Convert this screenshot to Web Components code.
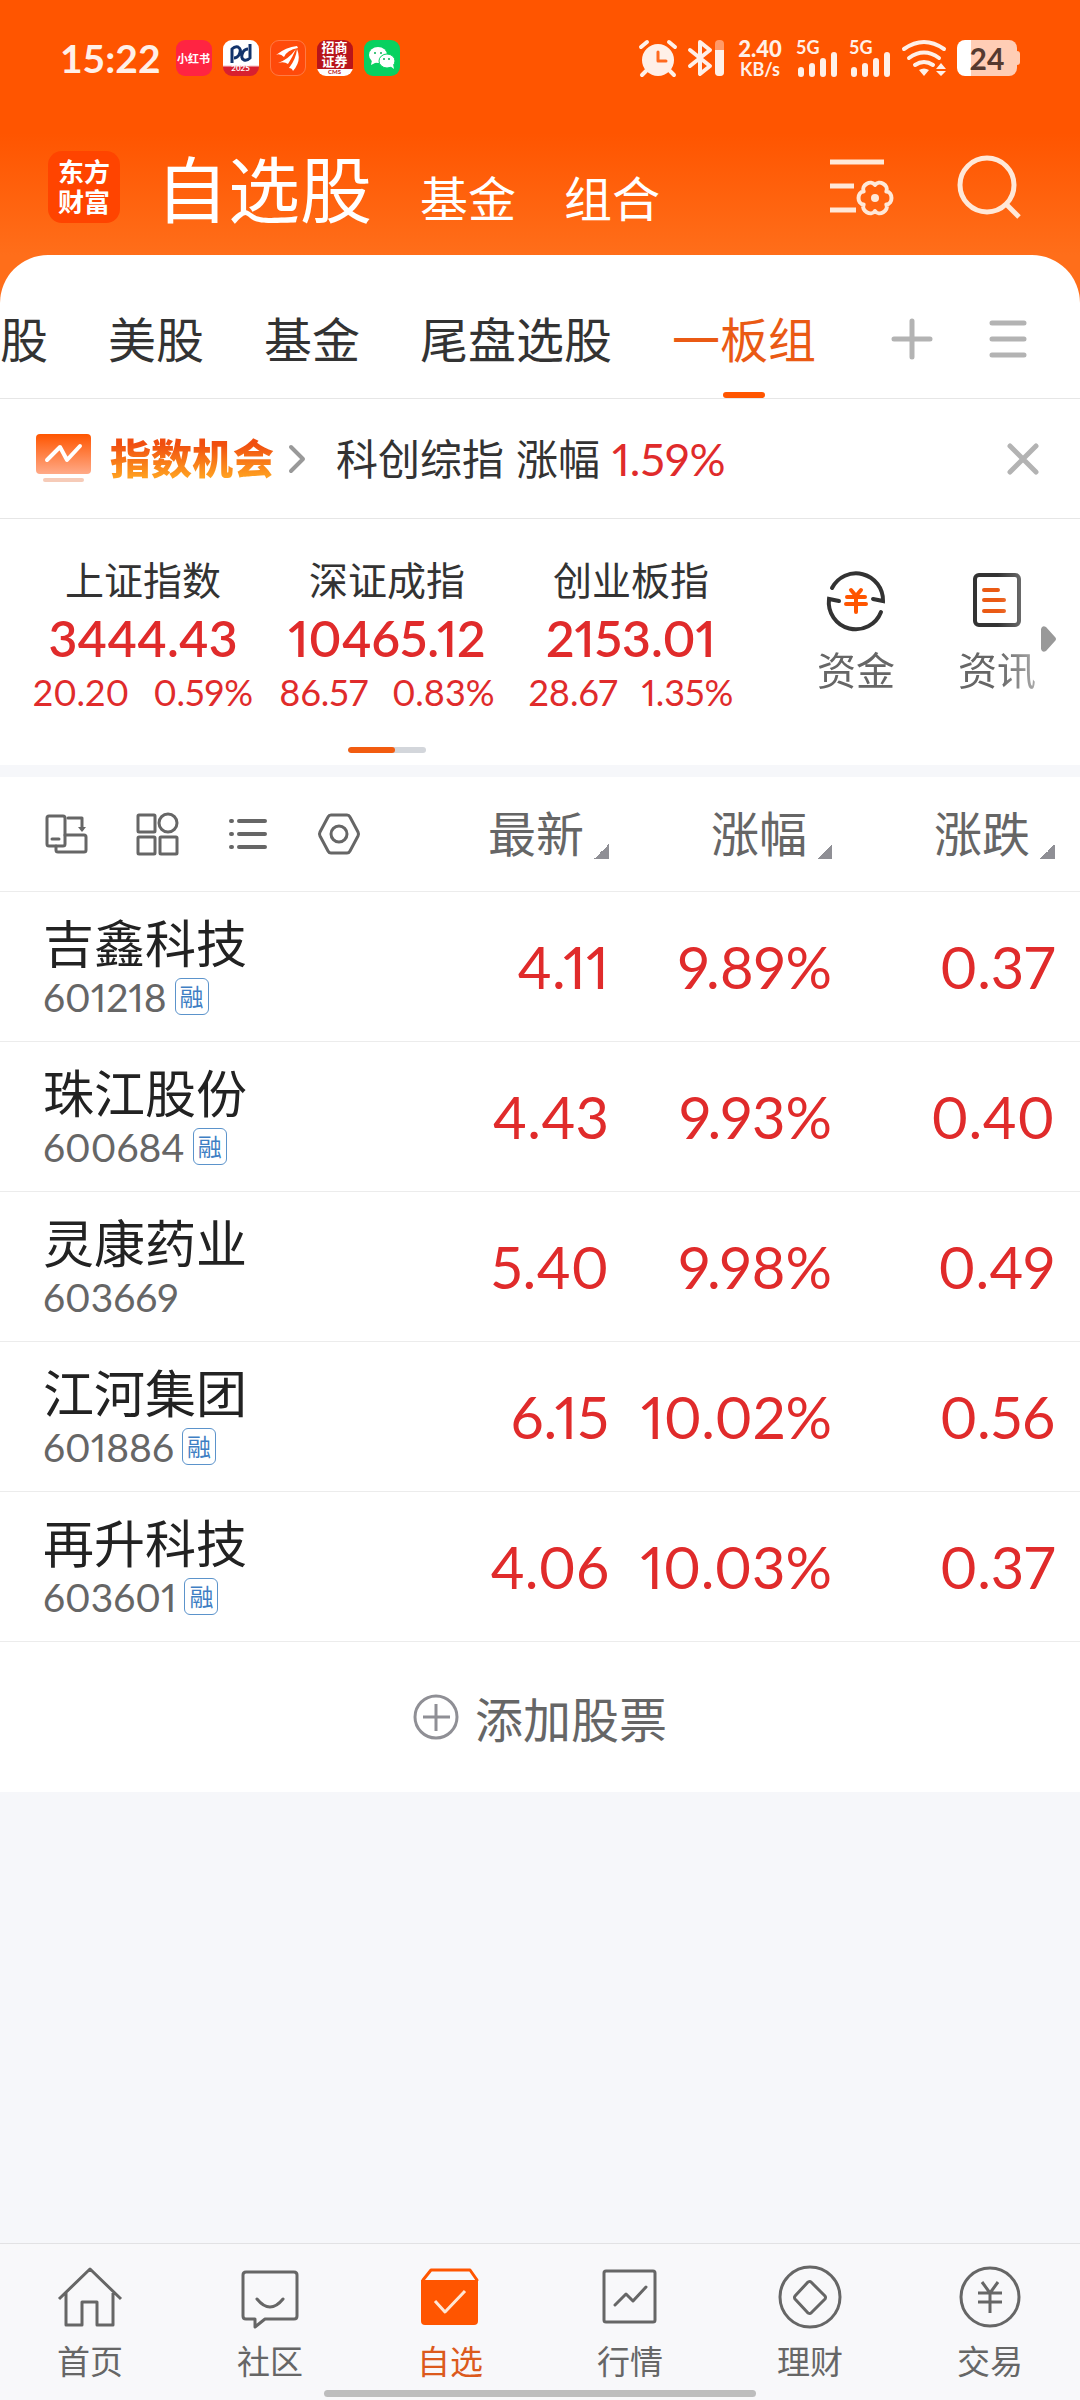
<!DOCTYPE html>
<html lang="zh-CN">
<head>
<meta charset="utf-8">
<meta name="viewport" content="width=device-width, initial-scale=1">
<title>自选股</title>
<style>
  :root {
    --color-accent: #ff5500;
    --color-accent-text: #ea5a14;
    --color-up: #e02b2b;
    --color-text: #333;
    --color-muted: #666;
    --color-faint: #b3b3b3;
    --color-line: #e6e6e6;
    --color-page: #f6f7fa;
  }

  body {
    margin: 0;
    font-family: Lato, "Noto Sans CJK SC", sans-serif;
    font-variant-numeric: proportional-nums;
    color: var(--color-text);
    background: var(--color-page);
  }
</style>
</head>
<body>
<watchlist-app></watchlist-app>

<script>
// Shapes for <line-icon>, drawn in currentColor
const ICONS = {
  alarm: [38, 36, `
    <circle cx="19" cy="20" r="16" fill="currentColor" stroke="none"/>
    <path d="M2 7l6-5M36 7l-6-5M7 31l-4 4M31 31l4 4" stroke-width="4"/>
    <path d="M19 12v9h8" stroke="#ff6a20" stroke-width="3"/>`],
  bluetooth: [36, 36, `
    <path d="M2 10l20 16-10 8V2l10 8L2 26" stroke-width="4"/>
    <rect x="27" y="0" width="9" height="36" rx="4" fill="currentColor" stroke="none" opacity=".45"/>
    <path d="M27 10h9v22a4 4 0 0 1-4 4h-1a4 4 0 0 1-4-4z" fill="currentColor" stroke="none"/>`],
  signal: [42, 36, `
    <text x="0" y="14" font-size="18" font-weight="700" fill="currentColor" stroke="none">5G</text>
    <path d="M5 30v4M16 26v8M27 21v13M38 15v19" stroke-width="6"/>`],
  wifi: [44, 36, `
    <path d="M2 9q20-14 40 0M7 18q15-11 30 0M13 25q9-6 18 0" stroke-width="4"/>
    <path d="M17 30q5-3 10 0l-5 6zM34 29l5-6 5 6zM34 31h10l-5 5z" fill="currentColor" stroke="none"/>`],
  manage: [64, 56, `
    <path d="M0 3h54M0 27h24M0 51h26" stroke-width="5" stroke-linecap="butt"/>
    <path d="M56.3 32.5C63.2 33 63.2 45 56.3 45.5C59.3 51.8 48.9 57.8 45 52C41.1 57.8 30.7 51.8 33.7 45.5C26.8 45 26.8 33 33.7 32.5C30.7 26.2 41.1 20.2 45 26C48.9 20.2 59.3 26.2 56.3 32.5Z" stroke-width="4"/>
    <circle cx="45" cy="39" r="4" fill="currentColor" stroke="none"/>`],
  search: [62, 62, `<circle cx="29" cy="29" r="27" stroke-width="5"/><path d="M48 48l13 13" stroke-width="5" stroke-linecap="butt"/>`],
  plus: [40, 40, `<path d="M20 2v36M2 20h36" stroke-width="5"/>`],
  menu: [36, 36, `<path d="M2 2h32M2 18h32M2 34h32" stroke-width="5"/>`],
  chevron: [16, 28, `<path d="M2 2l12 12L2 26" stroke-width="4"/>`],
  close: [30, 30, `<path d="M2 2l26 26M28 2L2 28" stroke-width="5"/>`],
  board: [56, 50, `
    <defs><linearGradient id="g" x2="0" y2="1"><stop stop-color="#ff5500"/><stop offset="1" stop-color="#ffaa88"/></linearGradient></defs>
    <rect width="55" height="40" rx="4" fill="url(#g)" stroke="none"/>
    <path d="M11 26l13-13 7 13 13-14" stroke="#fff" stroke-width="4"/>
    <path d="M9 46h37" stroke="#f6cbb8" stroke-width="4"/>`],
  funds: [58, 58, `
    <path d="M5 17A27 27 0 0 1 56 30l-10-2M54 41A27 27 0 0 1 2 28l10 2" stroke-width="4" stroke-linejoin="miter"/>
    <path d="M24 19l5 6 5-6M20 26h18M19 33h20M29 26v15" stroke="#ff5500" stroke-width="4"/>`],
  news: [48, 58, `
    <rect x="2" y="4" width="44" height="50" rx="4" stroke-width="4"/>
    <path d="M11 19h14M11 29h20M11 40h20" stroke="#ea5a14" stroke-width="4"/>`],
  rotate: [42, 42, `
    <rect x="2" y="3" width="18" height="30" rx="2"/>
    <path d="M7 26h7M20 22h19a2 2 0 0 1 2 2v13a2 2 0 0 1-2 2H13a2 2 0 0 1-2-2v-4M23 5h14v11"/>
    <path d="M33 14h8l-4 5z" fill="currentColor" stroke="none"/>`],
  grid: [42, 42, `
    <rect x="2" y="2" width="17" height="17" rx="1"/><circle cx="32" cy="10" r="9"/>
    <rect x="2" y="24" width="17" height="17" rx="1"/><rect x="24" y="24" width="17" height="17" rx="1"/>`],
  list: [42, 42, `<path d="M12 8h26M12 21h26M12 34h26M4 8h1M4 21h1M4 34h1" stroke-width="4"/>`],
  hexagon: [42, 42, `<path d="M13 2h16q2 0 3 2l8 15q1 2 0 4l-8 15q-1 2-3 2H13q-2 0-3-2L2 23q-1-2 0-4L10 4q1-2 3-2z"/><circle cx="21" cy="21" r="8"/>`],
  add: [46, 46, `<circle cx="23" cy="23" r="21"/><path d="M10 23h27M23 10v27" stroke-linecap="butt"/>`],
  home: [64, 64, `<path d="M1 34L32 4l31 30M8 28v32h16V37h15v23h16V28" stroke-linecap="butt"/>`],
  chat: [64, 64, `<path d="M8 7h48q3 0 3 3v41q0 3-3 3H27l-10 8v-8H8q-3 0-3-3V10q0-3 3-3zM19 34q13 16 26 0"/>`],
  box: [64, 64, `
    <path d="M3 15h57v41q0 4-4 4H7q-4 0-4-4z" fill="currentColor" stroke="none"/>
    <path d="M5 15l8-10h39l7 10"/>
    <path d="M17 36l10 11 20-21" stroke="#ffe6d4" stroke-linecap="butt"/>`],
  chart: [64, 64, `<rect x="6" y="6" width="51" height="51" rx="2"/><path d="M17 40l11-11 7 7 13-14"/>`],
  wealth: [64, 64, `<circle cx="32" cy="32" r="30"/><path d="M30 17q2-1 3 0l14 14q1 1 0 3L33 48q-1 1-3 0L17 34q-1-2 0-3z"/>`],
  trade: [64, 64, `<circle cx="32" cy="32" r="29"/><path d="M24 17l8 11 8-11M20 28h24M20 37h24M32 28v20" stroke-linecap="butt"/>`]
};

/** <line-icon name="..."> - one drawing from the icon set */
class LineIcon extends HTMLElement {
  connectedCallback() {
    const [width, height, body] = ICONS[this.getAttribute('name')];
    this.attachShadow({ mode: 'open' }).innerHTML = `
      <style>
        :host { display: block; flex: none; }
        svg { display: block; overflow: visible; }
      </style>
      <svg width="${width}" height="${height}" viewBox="0 0 ${width} ${height}" aria-hidden="true"
        fill="none" stroke="currentColor" stroke-width="3" stroke-linecap="round" stroke-linejoin="round">${body}</svg>
    `;
  }
}
customElements.define('line-icon', LineIcon);

/** <app-badge> - small rounded notification icon, content in the slot */
class AppBadge extends HTMLElement {
  connectedCallback() {
    this.attachShadow({ mode: 'open' }).innerHTML = `
      <style>
        :host {
          display: flex;
          flex-direction: column;
          align-items: center;
          justify-content: center;
          box-sizing: border-box;
          width: 36px;
          height: 36px;
          border-radius: 9px;
          color: #fff;
          font-size: 11px;
          font-weight: 700;
          line-height: 13px;
          text-align: center;
        }
      </style>
      <slot></slot>
    `;
  }
}
customElements.define('app-badge', AppBadge);

/** <status-bar> - phone status line */
class StatusBar extends HTMLElement {
  connectedCallback() {
    this.attachShadow({ mode: 'open' }).innerHTML = `
      <style>
        :host {
          display: flex;
          align-items: center;
          justify-content: space-between;
          padding: 40px 60px;
          height: 36px;
          color: #fff0e8;
          font-variant-numeric: tabular-nums;
        }
        .group { display: flex; align-items: center; gap: 11px; }
        time { font-size: 39px; font-weight: 700; line-height: 36px; margin-right: 4px; }
        .red { background: #ff2442; }
        .bank { background: linear-gradient(#fff 70%, #d8202f 76%); }
        .east { background: #ff4a0a; border: 1px solid #ff7a45; }
        .cms { background: linear-gradient(#b8141a 80%, #fff 82%); font-size: 13px; line-height: 14px; }
        .chat { background: #07d160; }
        .bank small, .cms small { font-size: 8px; line-height: 8px; }
        .cms span { width: 28px; }
        .cms small { font-size: 6px; color: #b8141a; }
        .speed { width: 50px; font-weight: 700; text-align: center; font-size: 18px; line-height: 18px; }
        .speed b { display: block; font-size: 22px; line-height: 22px; }
        .battery { display: flex; align-items: center; }
        .level {
          width: 60px;
          border-radius: 8px;
          background: linear-gradient(to right, #fff 14px, #ffcdb5 14px);
          color: #553a30;
          font-size: 30px;
          font-weight: 700;
          line-height: 36px;
          text-align: center;
        }
        .nub { width: 3px; height: 14px; border-radius: 0 3px 3px 0; background: #ffcdb5; }
      </style>
      <div class="group">
        <time>15:22</time>
        <app-badge class="red">小红书</app-badge>
        <app-badge class="bank">
          <svg width="22" height="20" viewBox="0 0 22 20" fill="none" stroke="#12336b" stroke-width="3"><path d="M2 19V8M2 13V5q3-3 6-2 4 2 1 8-2 3-5 3M20 0v14q-3 3-6 2-4-2-1-8 2-3 5-3"/></svg>
          <small>2025</small>
        </app-badge>
        <app-badge class="east">
          <svg width="26" height="26" viewBox="0 0 26 26" fill="#fff"><path d="M1 10Q11 2 22 1l1 2Q12 5 9 12 5 8 1 10zM3 18Q14 14 21 4q-4 9-8 15-4-3-10-1zM14 23Q21 14 22 4q5 12-4 22-1-3-4-3z"/></svg>
        </app-badge>
        <app-badge class="cms"><span>招商<br>证券</span><small>CMS</small></app-badge>
        <app-badge class="chat">
          <svg width="28" height="24" viewBox="0 0 28 24"><ellipse cx="10" cy="9" rx="9" ry="8" fill="#fff"/><path d="M4 14l-1 5 6-3z" fill="#fff"/><ellipse cx="19" cy="15" rx="8" ry="7" fill="#fff" stroke="#07d160"/><path d="M22 20l4 3-1-5z" fill="#fff"/><g fill="#07b053"><circle cx="7" cy="7" r="1"/><circle cx="13" cy="7" r="1"/><circle cx="16" cy="13" r="1"/><circle cx="21" cy="13" r="1"/></g></svg>
        </app-badge>
      </div>
      <div class="group">
        <line-icon name="alarm"></line-icon>
        <line-icon name="bluetooth"></line-icon>
        <div class="speed"><b>2.40</b>KB/s</div>
        <line-icon name="signal"></line-icon>
        <line-icon name="signal"></line-icon>
        <line-icon name="wifi"></line-icon>
        <div class="battery"><div class="level">24</div><div class="nub"></div></div>
      </div>
    `;
  }
}
customElements.define('status-bar', StatusBar);

/** <title-bar> - logo, main sections and header actions */
class TitleBar extends HTMLElement {
  connectedCallback() {
    this.attachShadow({ mode: 'open' }).innerHTML = `
      <style>
        :host { display: flex; align-items: center; height: 88px; padding: 27px 60px 24px 48px; color: #fff; }
        .logo {
          width: 56px;
          padding: 6px 8px;
          border-radius: 14px;
          background: #ff4400;
          font-size: 26px;
          font-weight: 700;
          line-height: 30px;
          text-align: center;
        }
        nav { flex: 1; display: flex; align-items: baseline; gap: 48px; margin-left: 36px; padding-top: 4px; }
        a { color: inherit; text-decoration: none; font-size: 48px; line-height: 60px; }
        h1 { margin: 0; font-size: 72px; font-weight: 400; line-height: 88px; }
        button { padding: 0; border: 0; background: none; color: #ffe8d8; margin-left: 64px; }
      </style>
      <div class="logo">东方财富</div>
      <nav>
        <h1>自选股</h1>
        <a href="#fund">基金</a>
        <a href="#portfolio">组合</a>
      </nav>
      <button aria-label="管理"><line-icon name="manage"></line-icon></button>
      <button aria-label="搜索"><line-icon name="search"></line-icon></button>
    `;
  }
}
customElements.define('title-bar', TitleBar);

/** <group-tabs> - watchlist groups */
class GroupTabs extends HTMLElement {
  connectedCallback() {
    const tabs = ['股', '美股', '基金', '尾盘选股', '一板组'];
    this.attachShadow({ mode: 'open' }).innerHTML = `
      <style>
        :host { display: flex; justify-content: space-between; border-bottom: 1px solid var(--color-line); }
        .tabs { display: flex; gap: 60px; }
        button { padding: 0; border: 0; background: none; font: inherit; color: inherit; }
        .tabs button {
          display: flex;
          flex-direction: column;
          align-items: center;
          padding-top: 55px;
          font-size: 48px;
          line-height: 60px;
          white-space: nowrap;
        }
        .tabs button::after { content: ""; width: 42px; height: 6px; margin-top: 22px; border-radius: 3px; }
        .tabs [aria-selected="true"] { color: var(--color-accent-text); }
        .tabs [aria-selected="true"]::after { background: var(--color-accent); }
        .tools { display: flex; align-items: center; gap: 58px; padding: 24px 54px 0 0; color: var(--color-faint); }
      </style>
      <div class="tabs" role="tablist">
        ${tabs.map((tab, i) => `<button role="tab" aria-selected="${i === 4}">${tab}</button>`).join('')}
      </div>
      <div class="tools">
        <button aria-label="添加分组"><line-icon name="plus"></line-icon></button>
        <button aria-label="全部分组"><line-icon name="menu"></line-icon></button>
      </div>
    `;
  }
}
customElements.define('group-tabs', GroupTabs);

/** <promo-line> - one line notice that can be closed */
class PromoLine extends HTMLElement {
  connectedCallback() {
    this.attachShadow({ mode: 'open' }).innerHTML = `
      <style>
        :host {
          display: flex;
          align-items: center;
          height: 119px;
          padding: 0 42px 0 36px;
          border-bottom: 1px solid var(--color-line);
          font-size: 42px;
          line-height: 60px;
        }
        a { display: flex; align-items: center; color: #999; text-decoration: none; }
        strong {
          margin: 0 15px 0 18px;
          font-weight: 900;
          font-size: 41px;
          color: transparent;
          background: linear-gradient(#f04e10 25%, #ffa020 80%);
          background-clip: text;
          -webkit-background-clip: text;
        }
        p { flex: 1; display: flex; gap: 12px; margin: 0 0 0 31px; }
        em { font-style: normal; font-size: 45px; color: var(--color-up); }
        button { padding: 0; border: 0; background: none; color: var(--color-faint); }
      </style>
      <a href="#chance"><line-icon name="board"></line-icon><strong>指数机会</strong><line-icon name="chevron"></line-icon></a>
      <p><span>科创综指</span><span>涨幅</span><em>1.59%</em></p>
      <button aria-label="关闭"><line-icon name="close"></line-icon></button>
    `;
  }
}
customElements.define('promo-line', PromoLine);

/** <index-card name value change percent> - one market index */
class IndexCard extends HTMLElement {
  connectedCallback() {
    this.attachShadow({ mode: 'open' }).innerHTML = `
      <style>
        :host { display: block; flex: 1; text-align: center; color: var(--color-up); }
        .name { font-size: 39px; line-height: 48px; color: var(--color-text); }
        .value { font-size: 50px; font-weight: 600; line-height: 68px; }
        .move { display: flex; justify-content: center; gap: 24px; font-size: 36px; line-height: 40px; }
      </style>
      <div class="name">${this.getAttribute('name')}</div>
      <div class="value">${this.getAttribute('value')}</div>
      <div class="move"><span>${this.getAttribute('change')}</span><span>${this.getAttribute('percent')}</span></div>
    `;
  }
}
customElements.define('index-card', IndexCard);

/** <index-strip> - index cards in the slot, shortcuts on the right */
class IndexStrip extends HTMLElement {
  connectedCallback() {
    this.attachShadow({ mode: 'open' }).innerHTML = `
      <style>
        :host { display: flex; border-bottom: 12px solid var(--color-page); }
        .indices { flex: 1; padding: 37px 0 12px 21px; }
        .cards { display: flex; }
        .pager { width: 78px; height: 6px; margin: 35px auto 0; border-radius: 3px; background: #d3d6db; overflow: hidden; }
        .pager i { display: block; width: 47px; height: 6px; border-radius: 3px; background: #f25c10; }
        .links { display: flex; align-items: flex-start; gap: 63px; padding: 52px 5px 0 64px;
          mask-image: linear-gradient(to right, #000 85%, rgba(0, 0, 0, .5)); }
        a {
          display: flex;
          flex-direction: column;
          align-items: center;
          gap: 17px;
          color: var(--color-text);
          text-decoration: none;
        }
        a span { color: var(--color-muted); font-size: 39px; line-height: 48px; }
        .more { width: 15px; height: 26px; margin: 107px 24px 0 0; color: #999; }
      </style>
      <div class="indices">
        <div class="cards"><slot></slot></div>
        <div class="pager"><i></i></div>
      </div>
      <div class="links">
        <a href="#funds"><line-icon name="funds"></line-icon><span>资金</span></a>
        <a href="#news"><line-icon name="news"></line-icon><span>资讯</span></a>
      </div>
      <svg class="more" viewBox="0 0 15 26" fill="currentColor"><path d="M0 3q1-4 5-2l9 10q2 2 0 4L5 25q-4 2-5-2z"/></svg>
    `;
  }
}
customElements.define('index-strip', IndexStrip);

/** <stock-table> - quotes of the selected group */
class StockTable extends HTMLElement {
  connectedCallback() {
    const stocks = [
      ['吉鑫科技', '601218', true, '4.11', '9.89%', '0.37'],
      ['珠江股份', '600684', true, '4.43', '9.93%', '0.40'],
      ['灵康药业', '603669', false, '5.40', '9.98%', '0.49'],
      ['江河集团', '601886', true, '6.15', '10.02%', '0.56'],
      ['再升科技', '603601', true, '4.06', '10.03%', '0.37']
    ];

    this.attachShadow({ mode: 'open' }).innerHTML = `
      <style>
        :host { display: block; }
        table { width: 100%; table-layout: fixed; border-spacing: 0; font-variant-numeric: inherit; }
        th, td { padding: 0; border-bottom: 1px solid #ececec; font-weight: 400; text-align: right; }
        th { height: 114px; color: var(--color-muted); }
        td { height: 149px; color: var(--color-up); font-size: 58px; white-space: nowrap; }
        .col { width: 223px; }
        .last { width: 248px; }
        th:last-child, td:last-child { padding-right: 25px; }
        th:first-child, td:first-child { padding-left: 43px; text-align: left; }
        button { padding: 0; border: 0; background: none; font: inherit; color: inherit; }
        .views { display: flex; gap: 49px; padding-left: 2px; }
        .sort { display: inline-flex; align-items: flex-end; gap: 10px; font-size: 48px; line-height: 60px; vertical-align: middle; }
        .sort::after { content: ""; width: 15px; height: 15px; margin-bottom: 5px;
          background: linear-gradient(135deg, transparent 50%, #8f8f95 50%); }
        .name { color: #222; font-size: 51px; line-height: 60px; }
        .code { display: flex; align-items: center; gap: 8px; color: var(--color-muted); font-size: 39px; line-height: 46px; }
        .tag { box-sizing: border-box; width: 34px; border: 1px solid #5b93cb; border-radius: 6px; color: #3f7fc4;
          font-size: 24px; line-height: 35px; text-align: center; }
      </style>
      <table>
        <colgroup><col><col class="col"><col class="col"><col class="last"></colgroup>
        <thead>
          <tr>
            <th><div class="views">
              <button aria-label="横屏"><line-icon name="rotate"></line-icon></button>
              <button aria-label="宫格"><line-icon name="grid"></line-icon></button>
              <button aria-label="列表"><line-icon name="list"></line-icon></button>
              <button aria-label="设置"><line-icon name="hexagon"></line-icon></button>
            </div></th>
            ${['最新', '涨幅', '涨跌'].map(label => `<th><button class="sort">${label}</button></th>`).join('')}
          </tr>
        </thead>
        <tbody>
          ${stocks.map(([name, code, margin, price, percent, change]) => `
            <tr>
              <td>
                <div class="name">${name}</div>
                <div class="code">${code}${margin ? '<span class="tag">融</span>' : ''}</div>
              </td>
              <td>${price}</td><td>${percent}</td><td>${change}</td>
            </tr>
          `).join('')}
        </tbody>
      </table>
    `;
  }
}
customElements.define('stock-table', StockTable);

/** <bottom-nav> - app sections and the system gesture bar */
class BottomNav extends HTMLElement {
  connectedCallback() {
    const items = [
      ['home', '首页'], ['chat', '社区'], ['box', '自选'],
      ['chart', '行情'], ['wealth', '理财'], ['trade', '交易']
    ];

    this.attachShadow({ mode: 'open' }).innerHTML = `
      <style>
        :host { display: block; padding: 21px 0 3px; border-top: 1px solid #e2e2e4; background: #f8f8fa; }
        nav { display: flex; }
        a {
          flex: 1;
          display: flex;
          flex-direction: column;
          align-items: center;
          gap: 12px;
          color: var(--color-muted);
          font-size: 33px;
          line-height: 40px;
          text-decoration: none;
        }
        a[aria-current] { color: var(--color-accent); }
        a[aria-current] span { color: #dc5a1c; }
        .gesture { width: 40%; height: 7px; margin: 9px auto 0; border-radius: 4px; background: #bdbdbd; }
      </style>
      <nav>
        ${items.map(([icon, label]) => `
          <a href="#${icon}" ${icon === 'box' ? 'aria-current="page"' : ''}><line-icon name="${icon}"></line-icon><span>${label}</span></a>
        `).join('')}
      </nav>
      <div class="gesture"></div>
    `;
  }
}
customElements.define('bottom-nav', BottomNav);

/** <watchlist-app> - page frame */
class WatchlistApp extends HTMLElement {
  connectedCallback() {
    this.attachShadow({ mode: 'open' }).innerHTML = `
      <style>
        :host { display: flex; flex-direction: column; min-height: 100vh; }
        header { padding-bottom: 48px; background: linear-gradient(#ff5500 133px, #ff6e1a 255px); }
        main { margin-top: -48px; border-radius: 48px 48px 0 0; background: #fff; overflow: hidden; }
        .add {
          display: flex;
          align-items: center;
          justify-content: center;
          gap: 16px;
          width: 100%;
          height: 150px;
          padding: 0;
          border: 0;
          background: none;
          color: var(--color-muted);
          font: inherit;
          font-size: 48px;
        }
        .add line-icon { color: #8f8f95; }
        bottom-nav { margin-top: auto; }
      </style>
      <header>
        <status-bar></status-bar>
        <title-bar></title-bar>
      </header>
      <main>
        <group-tabs></group-tabs>
        <promo-line></promo-line>
        <index-strip>
          <index-card name="上证指数" value="3444.43" change="20.20" percent="0.59%"></index-card>
          <index-card name="深证成指" value="10465.12" change="86.57" percent="0.83%"></index-card>
          <index-card name="创业板指" value="2153.01" change="28.67" percent="1.35%"></index-card>
        </index-strip>
        <stock-table></stock-table>
        <button class="add"><line-icon name="add"></line-icon>添加股票</button>
      </main>
      <bottom-nav></bottom-nav>
    `;
  }
}
customElements.define('watchlist-app', WatchlistApp);
</script>
</body>
</html>
